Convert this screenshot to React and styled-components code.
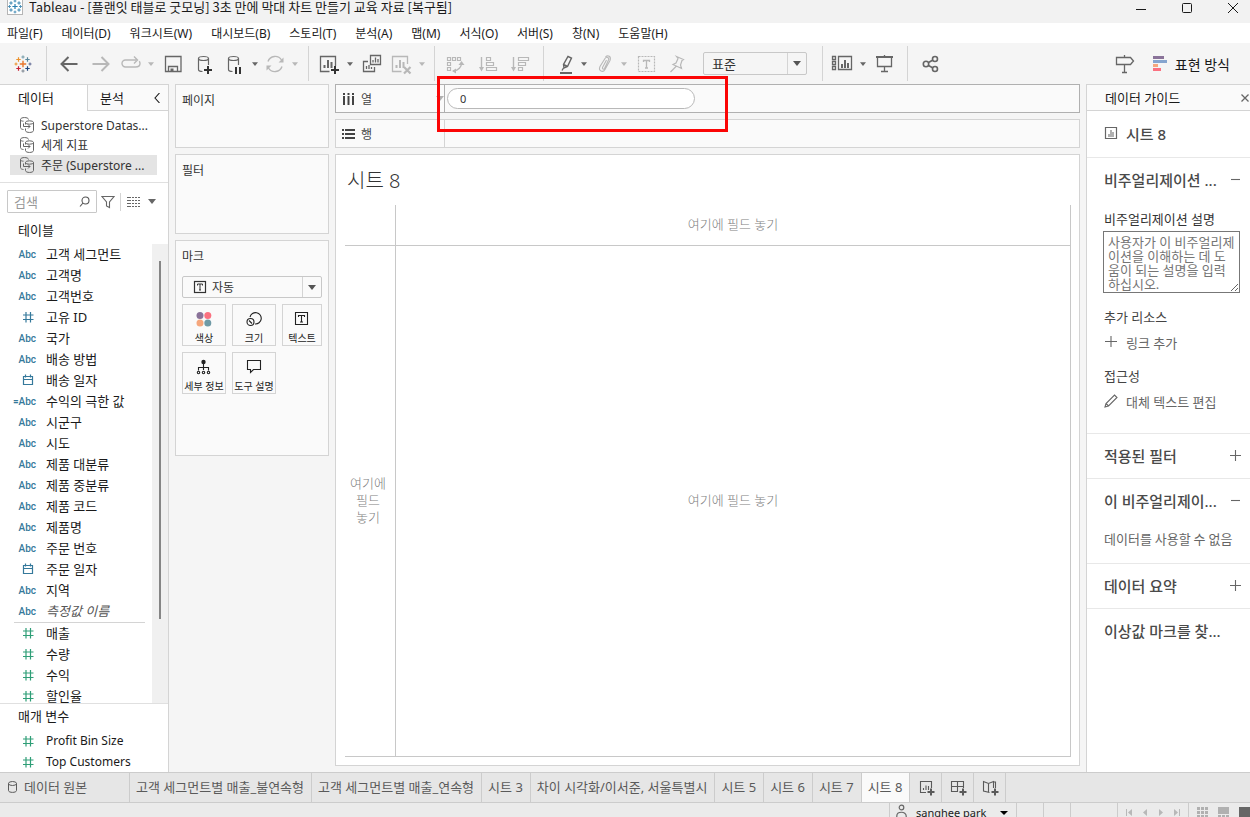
import React from "react";
import styled, { createGlobalStyle, css } from "styled-components";

const GlobalStyle = createGlobalStyle`
  * { box-sizing: border-box; }
  html, body { margin: 0; padding: 0; overflow: hidden; }
  body, button, input, select, textarea {
    font-family: "Noto Sans", "Noto Sans CJK KR", sans-serif;
    font-size: 13px;
    color: #1a1a1a;
  }
  button { background: none; border: 0; padding: 0; margin: 0; }
  ul { list-style: none; margin: 0; padding: 0; }
  h1, h2, h3, p { margin: 0; font-weight: 400; }
`;

const line = "#d4d4d4";
const ink = "#666666";
const faint = "#b8b8b8";
const narrowFont = `"Noto Sans CJK KR", sans-serif`;

const Window = styled.div`
  display: flex;
  flex-direction: column;
  height: 100vh;
  background: #f5f5f5;
  overflow: hidden;
`;

/* ---------- title bar and menu ---------- */
const TitleBar = styled.header`
  display: flex;
  align-items: flex-start;
  height: 23px;
  flex: none;
  padding-left: 7px;
  background: #f2f2f2;
`;
const AppIcon = styled.span`
  display: flex;
  width: 16px;
  height: 15px;
  border: 1px solid #b5b5b5;
  border-top: 0;
  background: #fff;
`;
const TitleText = styled.h1`
  flex: 1;
  margin-left: 6px;
  font-family: ${narrowFont};
  font-size: 13px;
  line-height: 14px;
  white-space: nowrap;
`;
const WindowButtons = styled.div`
  display: flex;
  margin-right: -6px;
`;
const WindowButton = styled.button`
  width: 46px;
  height: 15px;
  display: flex;
  align-items: center;
  justify-content: center;
`;
const MenuBar = styled.nav`
  display: flex;
  gap: 19px;
  height: 20px;
  flex: none;
  padding-left: 7px;
  background: #fff;
`;
const MenuItem = styled.button`
  padding-top: 1px;
  font-size: 12px;
  line-height: 19px;
  white-space: nowrap;
`;

/* ---------- toolbar ---------- */
const Toolbar = styled.div`
  display: flex;
  align-items: center;
  height: 41px;
  flex: none;
`;
const ToolButton = styled.button`
  display: flex;
  align-items: center;
  justify-content: center;
  width: ${(p) => p.$width || 32}px;
  height: 32px;
  flex: none;
  color: ${(p) => (p.$off ? faint : ink)};
`;
const HomeButton = styled(ToolButton)`
  width: 40px;
  padding-left: 5px;
`;
const ToolSlot = styled.span`
  display: flex;
  width: 28px;
  justify-content: center;
`;
const CaretSlot = styled.span`
  display: flex;
  width: 12px;
  justify-content: center;
`;
const Separator = styled.span`
  width: 1px;
  height: 35px;
  flex: none;
  margin: 0 ${(p) => (p.$wide ? 7 : 6)}px;
  background: ${line};
`;
const Spacer = styled.span`
  flex: 1;
`;
const ShowMe = styled.button`
  display: flex;
  align-items: center;
  gap: 7px;
  margin: 0 20px 0 12px;
  font-size: 14px;
  white-space: nowrap;
`;

const SelectBox = styled.label`
  position: relative;
  display: flex;
  align-items: center;
  height: ${(p) => p.$height}px;
  border: 1px solid #c8c8c8;
  border-radius: 2px;
  background: #fafafa;
  color: #333;
`;
const FitBox = styled(SelectBox)`
  width: 104px;
  flex: none;
  margin: 0 9px;
  background: #f5f5f5;
`;
const Select = styled.select`
  appearance: none;
  flex: 1;
  min-width: 0;
  height: 100%;
  border: 0;
  outline: 0;
  background: transparent;
  padding: 0 20px 0 ${(p) => (p.$small ? 5 : 8)}px;
  font-size: ${(p) => (p.$small ? 12 : 13)}px;
  color: #333;
`;
const SelectArrow = styled.span`
  position: absolute;
  top: 0;
  right: 0;
  bottom: 0;
  width: 19px;
  display: flex;
  align-items: center;
  justify-content: center;
  border-left: 1px solid ${line};
  pointer-events: none;
`;

/* ---------- workspace ---------- */
const Workspace = styled.main`
  display: flex;
  flex: 1;
  min-height: 0;
`;
const DataPane = styled.aside`
  display: flex;
  flex-direction: column;
  width: 169px;
  flex: none;
  background: #fff;
  border-top: 1px solid ${line};
  border-right: 1px solid ${line};
`;
const PaneTabs = styled.div`
  display: flex;
  height: 26px;
  flex: none;
`;
const PaneTab = styled.button`
  text-align: left;
  padding-left: ${(p) => (p.$active ? 18 : 12)}px;
  line-height: 24px;
  ${(p) =>
    p.$active
      ? css`width: 87px;`
      : css`
          flex: 1;
          display: flex;
          align-items: center;
          justify-content: space-between;
          padding-right: 6px;
          background: #fafafa;
          border-left: 1px solid ${line};
          border-bottom: 1px solid ${line};
        `}
`;
const Sources = styled.ul`
  flex: none;
  padding: 4px 11px 7px 10px;
  border-bottom: 1px solid #e0e0e0;
`;
const Source = styled.li`
  display: flex;
  align-items: center;
  gap: 5px;
  height: 20px;
  padding-left: 9px;
  font-size: 12px;
  color: #333;
  white-space: nowrap;
  background: ${(p) => (p.$active ? "#e4e4e4" : "transparent")};
  svg { flex: none; color: ${ink}; }
`;
const SearchRow = styled.div`
  display: flex;
  align-items: center;
  flex: none;
  margin: 7px 0 0 7px;
  height: 23px;
`;
const SearchBox = styled.label`
  display: flex;
  align-items: center;
  width: 90px;
  height: 23px;
  padding: 0 5px 0 6px;
  border: 1px solid #c8c8c8;
  border-radius: 1px;
  color: #555;
`;
const SearchInput = styled.input`
  flex: 1;
  min-width: 0;
  padding: 0;
  border: 0;
  outline: 0;
  font-size: 13px;
  &::placeholder { color: #999; opacity: 1; }
`;
const MiniButton = styled.button`
  display: flex;
  align-items: center;
  justify-content: center;
  width: ${(p) => p.$width}px;
  height: 20px;
  color: ${ink};
`;
const MiniRule = styled.span`
  width: 1px;
  height: 18px;
  margin: 0 2px;
  background: ${line};
`;
const PaneHeading = styled.h2`
  flex: none;
  padding-left: 18px;
  margin-top: ${(p) => (p.$spaced ? 5 : 0)}px;
  padding-bottom: 2px;
  font-size: 13px;
  line-height: 24px;
`;
const FieldArea = styled.div`
  display: flex;
  flex: 1;
  min-height: 0;
`;
const FieldList = styled.ul`
  flex: 1;
  overflow: hidden;
`;
const Field = styled.li`
  display: flex;
  align-items: center;
  gap: 10px;
  height: 21px;
  padding-bottom: ${(p) => (p.$latin ? 0 : 2)}px;
  font-size: ${(p) => (p.$latin ? 12 : 13)}px;
  white-space: nowrap;
  font-style: ${(p) => (p.$italic ? "italic" : "normal")};
  color: ${(p) => (p.$italic ? "#555" : "#1a1a1a")};
`;
const FieldKind = styled.span`
  display: flex;
  justify-content: flex-end;
  width: 36px;
  flex: none;
  padding-top: 1px;
  font-family: Roboto, sans-serif;
  font-size: 10px;
  font-weight: 500;
  font-style: normal;
  color: ${(p) => (p.$measure ? "#2f9e77" : "#35799b")};
`;
const FieldRule = styled.li`
  height: 1px;
  margin: 0 7px 0 14px;
  background: ${line};
`;
const ScrollTrack = styled.div`
  width: 16px;
  padding: 17px 0 84px 7px;
  background: #f0f0f0;
`;
const ScrollThumb = styled.div`
  width: 2px;
  height: 100%;
  background: #858585;
`;
const Parameters = styled.section`
  flex: none;
  border-top: 1px solid #e0e0e0;
`;

/* ---------- cards ---------- */
const CardColumn = styled.div`
  display: flex;
  flex-direction: column;
  gap: 6px;
  width: 154px;
  flex: none;
  margin: 0 6px;
`;
const Card = styled.section`
  flex: none;
  min-height: ${(p) => p.$height}px;
  padding: 6px 6px 0;
  background: #fafafa;
  border: 1px solid ${line};
`;
const CardTitle = styled.h2`
  font-size: 12px;
  line-height: 20px;
  color: #333;
`;
const MarkType = styled(SelectBox)`
  margin-top: 9px;
  padding-left: 10px;
`;
const MarkGrid = styled.div`
  display: grid;
  grid-template-columns: 44px 44px 40px;
  gap: 6px;
  margin-top: 6px;
`;
const MarkButton = styled.button`
  display: flex;
  flex-direction: column;
  align-items: center;
  gap: 2px;
  height: 42px;
  padding-top: 4px;
  border: 1px solid ${line};
  font-size: 10px;
  line-height: 14px;
  color: #222;
  white-space: nowrap;
`;

/* ---------- shelves and sheet ---------- */
const SheetColumn = styled.div`
  display: flex;
  flex-direction: column;
  gap: 6px;
  flex: 1;
  min-width: 0;
  padding-bottom: 6px;
`;
const Shelf = styled.section`
  display: flex;
  height: 29px;
  flex: none;
  background: #fafafa;
  border: 1px solid ${(p) => (p.$active ? "#b0b0b0" : line)};
`;
const ShelfLabel = styled.h2`
  display: flex;
  align-items: center;
  gap: 6px;
  width: 109px;
  padding-left: 6px;
  border-right: 1px solid ${(p) => (p.$active ? "#b0b0b0" : line)};
  font-size: 12px;
  color: #444;
`;
const ShelfBody = styled.div`
  position: relative;
  flex: 1;
  padding: 3px 2px;
`;
const Pill = styled.input`
  display: block;
  width: 248px;
  height: 21px;
  padding: 0 12px;
  border: 1px solid #b8b8b8;
  border-radius: 11px;
  outline: 0;
  background: #fff;
  font-size: 11px;
  color: #333;
`;
const Highlight = styled.div`
  position: absolute;
  z-index: 2;
  top: -9px;
  left: -8px;
  width: 291px;
  height: 56px;
  border: 3px solid #fb0505;
  pointer-events: none;
`;
const Sheet = styled.section`
  display: flex;
  flex-direction: column;
  flex: 1;
  min-height: 0;
  padding: 10px 8px 8px 9px;
  background: #fff;
  border: 1px solid ${line};
`;
const SheetTitle = styled.h2`
  padding-left: 2px;
  font-size: 20px;
  font-weight: 300;
  line-height: 32px;
  color: #333;
`;
const DropGrid = styled.div`
  flex: 1;
  display: grid;
  grid-template-columns: 51px 1fr;
  grid-template-rows: 41px 1fr;
  margin-top: 8px;
  border: 1px solid #c8c8c8;
  border-width: 0 1px 1px 0;
`;
const DropCell = styled.div`
  display: flex;
  align-items: center;
  justify-content: center;
  text-align: center;
  padding: 0 ${(p) => (p.$right ? 8 : 4)}px 1px 4px;
  line-height: 17px;
  font-weight: 300;
  color: #808080;
  border: 0 solid #c8c8c8;
  border-right-width: ${(p) => (p.$right ? 1 : 0)}px;
  border-bottom-width: ${(p) => (p.$bottom ? 1 : 0)}px;
`;

/* ---------- data guide ---------- */
const Guide = styled.aside`
  width: 164px;
  flex: none;
  margin-left: 6px;
  background: #fff;
  border: 1px solid ${line};
  border-width: 1px 0 0 1px;
  overflow: hidden;
`;
const GuideHead = styled.header`
  display: flex;
  align-items: center;
  justify-content: space-between;
  height: 26px;
  padding-left: 18px;
  background: #fafafa;
  border-bottom: 1px solid ${line};
`;
const GuideTitle = styled.h2`
  font-size: 13px;
`;
const GuideSection = styled.section`
  padding: 0 8px 0 17px;
  border-bottom: ${(p) => (p.$last ? 0 : 1)}px solid #e8e8e8;
`;
const GuideHeading = styled.h3`
  display: flex;
  align-items: center;
  justify-content: ${(p) => (p.$start ? "flex-start" : "space-between")};
  gap: ${(p) => (p.$start ? 8 : 0)}px;
  height: ${(p) => (p.$start ? 46 : 44)}px;
  padding-bottom: 2px;
  font-size: 15px;
  font-weight: 500;
  color: #4a4a4a;
  white-space: nowrap;
  svg { color: ${ink}; }
`;
const GuideLabel = styled.label`
  display: block;
  line-height: 20px;
  color: #333;
  white-space: nowrap;
`;
const GuideCaption = styled.p`
  margin-top: 14px;
  line-height: 20px;
  color: #444;
`;
const Description = styled.textarea`
  display: block;
  width: 137px;
  height: 62px;
  margin: 2px 0 0 -1px;
  padding: 3px 4px;
  border: 1px solid #777;
  border-radius: 0;
  line-height: 14px;
  overflow: hidden;
  &::placeholder { color: #757575; opacity: 1; }
`;
const GuideAction = styled.button`
  display: flex;
  align-items: center;
  gap: 8px;
  height: 20px;
  margin-top: 5px;
  color: ${ink};
  white-space: nowrap;
`;
const GuideText = styled.p`
  line-height: 20px;
  padding: 6px 0 14px;
  font-family: ${narrowFont};
  color: #666;
  white-space: nowrap;
`;
const GuideFirst = styled.div`
  padding: 7px 0 22px;
`;

/* ---------- bottom bars ---------- */
const SheetTabs = styled.nav`
  display: flex;
  height: 31px;
  flex: none;
  background: #e6e6e6;
  border: 1px solid #cccccc;
  border-width: 1px 0;
`;
const SheetTab = styled.button`
  display: flex;
  align-items: center;
  gap: 7px;
  min-width: ${(p) => (p.$source ? 130 : 0)}px;
  padding: 0 7px 2px ${(p) => (p.$source ? 8 : 6)}px;
  border-right: 1px solid #cccccc;
  background: ${(p) => (p.$active ? "#fafafa" : "transparent")};
  color: #5a5a5a;
  white-space: nowrap;
`;
const NewTab = styled(SheetTab)`
  justify-content: center;
  width: 32px;
  padding: 0;
`;
const StatusBar = styled.footer`
  display: flex;
  justify-content: flex-end;
  height: 14px;
  flex: none;
  background: #ebebeb;
`;
const StatusCell = styled.div`
  display: flex;
  gap: ${(p) => p.$gap || 0}px;
  width: ${(p) => p.$width}px;
  padding-left: ${(p) => p.$pad || 0}px;
  border-left: 1px solid #cccccc;
`;
const UserButton = styled.button`
  display: flex;
  align-items: flex-start;
  flex: 1;
  gap: 9px;
  height: 20px;
  font-size: 11px;
  line-height: 20px;
  svg { color: ${ink}; }
`;
const UserName = styled.span`
  flex: 1;
  text-align: left;
  white-space: nowrap;
`;

/* ---------- icons ---------- */
const Svg = ({ size = 24, w, h, sw = 1, children }) => (
  <svg width={w || size} height={h || size} viewBox={`0 0 ${w || size} ${h || size}`} fill="none" stroke="currentColor" strokeWidth={sw} aria-hidden="true">
    {children}
  </svg>
);
const Caret = ({ size = 6, color = "currentColor" }) => (
  <svg width={size} height={size / 2 + 1} viewBox="0 0 8 5" aria-hidden="true">
    <path d="M0 0h8L4 5z" fill={color} />
  </svg>
);
const Cross = ({ x, y, r, c, w }) => <path d={`M${x - r} ${y}h${2 * r}M${x} ${y - r}v${2 * r}`} stroke={c} strokeWidth={w} />;

const TableauMark = () => (
  <Svg w={18} h={18}>
    <Cross x={9} y={9} r={3.2} c="#e8762d" w={1.4} />
    <Cross x={4.5} y={4.5} r={2.2} c="#eb912b" w={1.2} />
    <Cross x={13.5} y={4.5} r={2.2} c="#59879b" w={1.2} />
    <Cross x={4.5} y={13.5} r={2.2} c="#c72035" w={1.2} />
    <Cross x={13.5} y={13.5} r={2.2} c="#1f457e" w={1.2} />
    <Cross x={9} y={2} r={1.6} c="#7099a6" w={1} />
    <Cross x={9} y={16} r={1.6} c="#7b848f" w={1} />
    <Cross x={2} y={9} r={1.5} c="#eb912b" w={1} />
    <Cross x={16} y={9} r={1.5} c="#5b6591" w={1} />
  </Svg>
);
const TitleMark = () => (
  <Svg w={14} h={14}>
    <Cross x={7} y={6.5} r={2.6} c="#2a7fb0" w={1.2} />
    {[[3, 3], [11, 3], [3, 10], [11, 10]].map(([x, y]) => <Cross key={`${x}${y}`} x={x} y={y} r={1.7} c="#3a86b0" w={1} />)}
    {[[7, 1], [7, 12], [1.5, 6.5], [12.5, 6.5]].map(([x, y]) => <Cross key={`${x}-${y}`} x={x} y={y} r={1.4} c="#4a90b8" w={1} />)}
  </Svg>
);
const Database = ({ children }) => (
  <Svg sw={1.2}>
    <ellipse cx="10.5" cy="6.500" rx="5" ry="2" />
    <path d="M5.500 6.500v11c0 1.300 1.500 2 4 2M15.500 6.500V13" />
    {children}
  </Svg>
);
const ChartBars = () => <path d="M6.500 16v-3M10 16V8M13.500 16v-6" strokeWidth="2" />;

const icons = {
  back: <Svg sw={2}><path d="M20.500 12H5M11.500 5l-7 7 7 7" /></Svg>,
  forward: <Svg sw={2}><path d="M3.500 12H19M12.500 5l7 7-7 7" /></Svg>,
  redo: <Svg sw={1.4}><path d="M17.500 8H6.500a3.500 3.500 0 0 0 0 7h10c3 0 4.500-1.500 4.500-3.500 0-1-.3-1.700-.8-2.300M15 4.500L18.500 8 15 11.500" /></Svg>,
  save: <Svg sw={1.3}><path d="M4.500 4.500h15.500v15H4.500zM7.500 19.500v-5h9v5" /><path d="M9.500 16.500h3v3h-3z" fill="currentColor" stroke="none" /></Svg>,
  addData: <Database><path d="M15 14v8M11 18h8" stroke="#333" strokeWidth="2" /></Database>,
  pause: <Database><path d="M13 15v7M17 15v7" stroke="#333" strokeWidth="2" /></Database>,
  refresh: <Svg sw={1.4}><path d="M5 9.500A7.500 7.500 0 0 1 18.500 8M19 14.500A7.500 7.500 0 0 1 5.500 16" /><path d="M20.500 5.500v5h-5zM3.500 18.500v-5h5z" fill="currentColor" stroke="none" /></Svg>,
  newSheet: <Svg><path d="M11.500 19.500h-9v-15h15V14" strokeWidth="1.3" /><ChartBars /><path d="M17 14v8M13 18h8" stroke="#333" strokeWidth="2" /></Svg>,
  duplicate: <Svg sw={1.3}><path d="M10.500 3.500h10v9h-10zM8 9.500H3.500v10h11V15M6.500 17v-3M9 17v-4M11.500 17v-2M13 10.500V8M15.500 10.500v-5M18 10.500V7" /></Svg>,
  clear: <Svg><path d="M11.500 19.500h-9v-15h15V12" strokeWidth="1.3" /><ChartBars /><path d="M14 15l6.500 6.500M20.500 15L14 21.500" strokeWidth="2.200" /></Svg>,
  swap: <Svg sw={1.2}><path d="M2.500 5.500h3v3h-3zM7.500 5.500h3v3h-3zM12.500 5.500h3v3h-3zM2.500 10.500h3v3h-3zM2.500 15.500h3v3h-3z" /><path d="M16.500 11c0 4-3 7.500-8 8" strokeWidth="1.4" /><path d="M13.500 13l3-4 3 4zM11 16.500v5l-4-2.500z" fill="currentColor" stroke="none" /></Svg>,
  sortAsc: <Svg sw={1.2}><path d="M4.500 5v11" strokeWidth="1.4" /><path d="M2 15h5l-2.500 4.500z" fill="currentColor" stroke="none" /><path d="M9.500 5.500h4v3h-4zM9.500 10.500h7v3h-7zM9.500 15.500h10v3h-10z" /></Svg>,
  sortDesc: <Svg sw={1.2}><path d="M4.500 5v11" strokeWidth="1.4" /><path d="M2 15h5l-2.500 4.500z" fill="currentColor" stroke="none" /><path d="M9.500 5.500h10v3h-10zM9.500 10.500h7v3h-7zM9.500 15.500h4v3h-4z" /></Svg>,
  highlighter: <Svg><path d="M16 4.500l3.500 1.500-4 8.500-3.500 1.500-.5-3.500zM11.500 12.500l4 2M11.500 16l-1.500 2.500" strokeWidth="1.4" /><path d="M8 21h12" strokeWidth="2" /></Svg>,
  clip: <Svg sw={1.1}><path d="M14.500 8l-4 7.500c-.6 1.500 1.200 2.300 2 1l4-8.500c1-2.500-2-3.800-3.500-1.500L8 14.500c-2 4.500 3 6.500 5 3L18 8.500c1.500-4-2-6-4.500-3.500" /></Svg>,
  textLabel: <Svg><rect x="4.500" y="4.500" width="16" height="15" strokeDasharray="2 1" strokeWidth="1.200" /><path d="M9.500 10V8.500h6V10M12.500 8.500v7.500M11 16h3" strokeWidth="1.3" /></Svg>,
  pin: <Svg sw={1.2}><path d="M10.500 4.500l7 3-1.500 1-1.500 4.500 1 3.500-8.500-4 3-1.500 2-4.500zM10 14.500L4.500 20" /></Svg>,
  cards: <Svg sw={1.3}><path d="M1.500 4.500h3v3h-3zM1.500 9.500h3v3h-3zM1.500 14.500h3v3h-3zM7.500 4.500h13v13h-13z" /><path d="M11 16v-4M14 16V8M17 16v-5" strokeWidth="2" /></Svg>,
  present: <Svg sw={1.3}><path d="M3 5h17" strokeWidth="2" /><path d="M4.500 6v8.500h14V6M11.500 14.500v5M8 19.500h7M11.500 3v2" /></Svg>,
  share: <Svg sw={1.6}><circle cx="8" cy="12" r="2.700" /><circle cx="17" cy="7" r="2.500" /><circle cx="17" cy="17" r="2.500" /><path d="M10.500 10.500L15 8M10.500 13.500l4.500 2.500" /></Svg>,
  guide: <Svg sw={1.3}><path d="M3.500 5.500h14l3 3.500-3 3.500h-14zM11.500 3v2.500M11.500 12.500v8M9 20.500h5" /></Svg>,
};

const Tool = ({ icon, label, off, menu }) => (
  <ToolButton aria-label={label} $off={off} $width={menu ? 40 : 32}>
    {menu ? (
      <>
        <ToolSlot>{icons[icon]}</ToolSlot>
        <CaretSlot><Caret /></CaretSlot>
      </>
    ) : icons[icon]}
  </ToolButton>
);

const HashIcon = () => <Svg w={16} h={14} sw={1.2}><path d="M6 2v10.500M10.500 2v10.500M3 5h10.500M3 9.500h10.500" /></Svg>;
const CalendarIcon = () => <Svg w={16} h={14} sw={1.2}><path d="M3.500 3.500h9v8h-9zM3.500 6.500h9M5.500 1.500v3M10.500 1.500v3" /></Svg>;
const SourceIcon = () => (
  <Svg w={17} h={16} sw={1}>
    <path d="M9.500 2.500c0-2.600-8-2.600-8 0v8c0 1.200 1.500 2 3 2M1.500 2.500c0 1.200 1.500 1.700 3 1.700" />
    <path d="M6.500 5.500v2M6.500 11.500v2c0 2.600 8 2.600 8 0v-8" />
    <ellipse cx="10.500" cy="5.500" rx="4" ry="1.700" />
    <path d="M4.500 6.500v3h6.500M9 7.500l2 2-2 2" />
  </Svg>
);
const Plus = ({ size = 13 }) => <Svg size={size} sw={1.1}><path d="M6.500 1v11M1 6.500h11" /></Svg>;
const Minus = () => <Svg size={13} sw={1.1}><path d="M2 6.500h9" /></Svg>;
const BoxedT = ({ size }) => (
  <Svg w={size} h={size} sw={1.2}>
    <rect x="1.500" y="1.500" width={size - 3} height={size - 3} />
    <path d={`M${size / 2 - 2.5} 5.500v-1.500h5v1.500M${size / 2} 4v${size - 8}M${size / 2 - 1} ${size - 4}h2`} strokeWidth="1" />
  </Svg>
);

const markIcons = {
  color: (
    <Svg w={20} h={20}>
      <g stroke="none">
        <circle cx="6" cy="6.500" r="3.500" fill="#8a7399" />
        <circle cx="13.800" cy="6.500" r="3.500" fill="#fb7180" />
        <circle cx="6" cy="14" r="3.500" fill="#f5a77d" />
        <circle cx="13.800" cy="14" r="3.500" fill="#6f9aa6" />
      </g>
    </Svg>
  ),
  size: <Svg size={20} sw={1.1}><path d="M6 8a5.700 5.700 0 1 1 5 7" /><circle cx="6.500" cy="13" r="3.500" /><path d="M5 11.500l3 3" /></Svg>,
  text: <Svg size={20} sw={1.1}><path d="M3.500 3.500h12v12h-12zM6.500 8V6.500h6V8M9.500 6.500v6.500M8 13h3" /></Svg>,
  detail: (
    <Svg size={20} sw={1.1}>
      <circle cx="9.500" cy="5" r="2.200" fill="currentColor" stroke="none" />
      <path d="M9.500 6v7M4.500 13.500v-3h10v3" />
      <circle cx="4.500" cy="15.500" r="1.200" /><circle cx="9.500" cy="15.500" r="1.200" /><circle cx="14.500" cy="15.500" r="1.200" />
    </Svg>
  ),
  tooltip: <Svg size={20} sw={1.1}><path d="M3.500 3.500h13v9H9.500l-3 3v-3h-3z" /></Svg>,
};

const tabIcons = {
  sheet: <Svg size={18} sw={1.1}><path d="M9 13.500H3.500v-11h11V9M6.500 11V9M9 11V6.500M11.500 11V7" /><path d="M14 9.500v7M10.500 13h7" strokeWidth="2" /></Svg>,
  dashboard: <Svg size={18} sw={1.1}><path d="M9 12.500H2.500v-10h12V9M2.500 7.500h12M8.500 2.500v10" /><path d="M14 9.500v7M10.500 13h7" strokeWidth="2" /></Svg>,
  story: <Svg size={18} sw={1.1}><path d="M8.500 13.500l-6-1.500V2.500l5 2 5-2V9M7.500 4.500V13M12.500 3h2v6" /><path d="M14 9.500v7M10.500 13h7" strokeWidth="2" /></Svg>,
};

/* ---------- content ---------- */
const menus = ["파일(F)", "데이터(D)", "워크시트(W)", "대시보드(B)", "스토리(T)", "분석(A)", "맵(M)", "서식(O)", "서버(S)", "창(N)", "도움말(H)"];
const dimensions = [
  ["Abc", "고객 세그먼트"], ["Abc", "고객명"], ["Abc", "고객번호"], ["#", "고유 ID"], ["Abc", "국가"],
  ["Abc", "배송 방법"], ["date", "배송 일자"], ["=Abc", "수익의 극한 값"], ["Abc", "시군구"], ["Abc", "시도"],
  ["Abc", "제품 대분류"], ["Abc", "제품 중분류"], ["Abc", "제품 코드"], ["Abc", "제품명"], ["Abc", "주문 번호"],
  ["date", "주문 일자"], ["Abc", "지역"], ["Abc", "측정값 이름"],
];
const measures = ["매출", "수량", "수익", "할인율"];
const sheets = ["고객 세그먼트별 매출_불연속형", "고객 세그먼트별 매출_연속형", "시트 3", "차이 시각화/이서준, 서울특별시", "시트 5", "시트 6", "시트 7", "시트 8"];

const FieldRow = ({ kind, name, measure, latin }) => (
  <Field $italic={name === "측정값 이름"} $latin={latin}>
    <FieldKind $measure={measure}>
      {kind === "#" ? <HashIcon /> : kind === "date" ? <CalendarIcon /> : kind}
    </FieldKind>
    {name}
  </Field>
);

export default function App() {
  return (
    <Window>
      <GlobalStyle />
      <TitleBar>
        <AppIcon><TitleMark /></AppIcon>
        <TitleText>Tableau - [플랜잇 태블로 굿모닝] 3초 만에 막대 차트 만들기 교육 자료 [복구됨]</TitleText>
        <WindowButtons>
          <WindowButton aria-label="최소화"><Svg size={12}><path d="M1 7.500h10" /></Svg></WindowButton>
          <WindowButton aria-label="최대화"><Svg size={12}><rect x="1.500" y="1.500" width="9" height="9" rx="1" /></Svg></WindowButton>
          <WindowButton aria-label="닫기"><Svg size={12}><path d="M1 1l10 10M11 1L1 11" /></Svg></WindowButton>
        </WindowButtons>
      </TitleBar>
      <MenuBar>{menus.map((m) => <MenuItem key={m}>{m}</MenuItem>)}</MenuBar>

      <Toolbar>
        <HomeButton aria-label="시작 페이지"><TableauMark /></HomeButton>
        <Separator />
        <Tool icon="back" label="뒤로" />
        <Tool icon="forward" label="앞으로" off />
        <Tool icon="redo" label="다시 실행" off menu />
        <Tool icon="save" label="저장" />
        <Tool icon="addData" label="새 데이터 원본" />
        <Tool icon="pause" label="자동 업데이트 일시 중지" menu />
        <Tool icon="refresh" label="새로 고침" off menu />
        <Separator $wide />
        <Tool icon="newSheet" label="새 워크시트" menu />
        <Tool icon="duplicate" label="복제" />
        <Tool icon="clear" label="시트 지우기" off menu />
        <Separator />
        <Tool icon="swap" label="행과 열 바꾸기" off />
        <Tool icon="sortAsc" label="오름차순 정렬" off />
        <Tool icon="sortDesc" label="내림차순 정렬" off />
        <Separator />
        <Tool icon="highlighter" label="하이라이트" menu />
        <Tool icon="clip" label="그룹" off menu />
        <Tool icon="textLabel" label="마크 레이블 표시" off />
        <Tool icon="pin" label="축 고정" off />
        <FitBox $height={23}>
          <Select aria-label="맞춤"><option>표준</option></Select>
          <SelectArrow><Caret size={8} color="#555" /></SelectArrow>
        </FitBox>
        <Separator />
        <Tool icon="cards" label="카드 표시" menu />
        <Tool icon="present" label="프레젠테이션 모드" />
        <Separator />
        <Tool icon="share" label="공유" />
        <Spacer />
        <Tool icon="guide" label="데이터 가이드 열기" />
        <ShowMe>
          <Svg w={15} h={16}>
            <g stroke="none">
              <path d="M0 0h11v3H0z" fill="#8a7399" /><path d="M0 4h14v3H0z" fill="#86a5cf" />
              <path d="M0 8h5v3H0z" fill="#f5a77d" /><path d="M0 12h8v3H0z" fill="#fb7180" />
            </g>
          </Svg>
          표현 방식
        </ShowMe>
      </Toolbar>

      <Workspace>
        <DataPane>
          <PaneTabs>
            <PaneTab $active>데이터</PaneTab>
            <PaneTab>분석<Svg size={10} sw={1.1}><path d="M7.500 0L3 5l4.500 5" /></Svg></PaneTab>
          </PaneTabs>
          <Sources>
            <Source><SourceIcon />Superstore Datas...</Source>
            <Source><SourceIcon />세계 지표</Source>
            <Source $active><SourceIcon />주문 (Superstore ...</Source>
          </Sources>
          <SearchRow>
            <SearchBox>
              <SearchInput placeholder="검색" aria-label="검색" />
              <Svg size={12} sw={1.1}><circle cx="6.500" cy="4.500" r="3.500" /><path d="M4 7L1 10.500" /></Svg>
            </SearchBox>
            <MiniButton aria-label="필터" $width={21}><Svg size={14} sw={1.1}><path d="M1 1.500h12L8.500 7v5.500l-3-1.500V7z" /></Svg></MiniButton>
            <MiniRule />
            <MiniButton aria-label="보기" $width={21}>
              <Svg w={13} h={10}><path d="M0 .5h13M0 3.500h13M0 6.500h13M0 9.500h13" strokeDasharray="4 1 2 1 2 1 2 1" /></Svg>
            </MiniButton>
            <MiniButton aria-label="옵션" $width={16}><Caret size={8} /></MiniButton>
          </SearchRow>
          <PaneHeading $spaced>테이블</PaneHeading>
          <FieldArea>
            <FieldList>
              {dimensions.map(([k, n]) => <FieldRow key={n} kind={k} name={n} />)}
              <FieldRule />
              {measures.map((n) => <FieldRow key={n} kind="#" name={n} measure />)}
            </FieldList>
            <ScrollTrack><ScrollThumb /></ScrollTrack>
          </FieldArea>
          <Parameters>
            <PaneHeading>매개 변수</PaneHeading>
            <ul>
              <FieldRow kind="#" name="Profit Bin Size" measure latin />
              <FieldRow kind="#" name="Top Customers" measure latin />
            </ul>
          </Parameters>
        </DataPane>

        <CardColumn>
          <Card $height={64}><CardTitle>페이지</CardTitle></Card>
          <Card $height={80}><CardTitle>필터</CardTitle></Card>
          <Card $height={216}>
            <CardTitle>마크</CardTitle>
            <MarkType $height={22}>
              <BoxedT size={14} />
              <Select aria-label="마크 유형" $small><option>자동</option></Select>
              <SelectArrow><Caret size={8} color="#555" /></SelectArrow>
            </MarkType>
            <MarkGrid>
              <MarkButton>{markIcons.color}색상</MarkButton>
              <MarkButton>{markIcons.size}크기</MarkButton>
              <MarkButton>{markIcons.text}텍스트</MarkButton>
              <MarkButton>{markIcons.detail}세부 정보</MarkButton>
              <MarkButton>{markIcons.tooltip}도구 설명</MarkButton>
            </MarkGrid>
          </Card>
        </CardColumn>

        <SheetColumn>
          <Shelf $active>
            <ShelfLabel $active>
              <Svg w={13} h={12} sw={2}><path d="M2 0v2M6.500 0v2M11 0v2M2 3v9M6.500 3v9M11 3v9" /></Svg>
              열
              <Spacer />
              <Caret size={8} color="#b0b0b0" />
            </ShelfLabel>
            <ShelfBody>
              <Pill aria-label="열 필드" defaultValue="0" />
              <Highlight />
            </ShelfBody>
          </Shelf>
          <Shelf>
            <ShelfLabel>
              <Svg w={13} h={12} sw={2}><path d="M0 2h2M0 6h2M0 10h2M3 2h10M3 6h10M3 10h10" /></Svg>
              행
            </ShelfLabel>
          </Shelf>
          <Sheet>
            <SheetTitle>시트 8</SheetTitle>
            <DropGrid>
              <DropCell $right $bottom />
              <DropCell $bottom>여기에 필드 놓기</DropCell>
              <DropCell $right>여기에<br />필드<br />놓기</DropCell>
              <DropCell>여기에 필드 놓기</DropCell>
            </DropGrid>
          </Sheet>
        </SheetColumn>

        <Guide>
          <GuideHead>
            <GuideTitle>데이터 가이드</GuideTitle>
            <MiniButton aria-label="닫기" $width={10}><Svg size={10} sw={1.3}><path d="M1.500 1.500l7 7M8.500 1.500l-7 7" /></Svg></MiniButton>
          </GuideHead>
          <GuideSection>
            <GuideHeading $start>
              <Svg size={14}><path d="M1.500 1.500h11v11h-11z" strokeWidth="1.200" /><path d="M5 11V8M7 11V4M9 11V6" stroke="#b0b0b0" strokeWidth="2" /></Svg>
              시트 8
            </GuideHeading>
          </GuideSection>
          <GuideSection>
            <GuideHeading>비주얼리제이션 ...<Minus /></GuideHeading>
            <GuideFirst>
              <GuideLabel htmlFor="description">비주얼리제이션 설명</GuideLabel>
              <Description id="description" placeholder="사용자가 이 비주얼리제이션을 이해하는 데 도움이 되는 설명을 입력하십시오." />
              <GuideCaption>추가 리소스</GuideCaption>
              <GuideAction><Svg size={14} sw={1.100}><path d="M7 1v11M1 6.500h12" /></Svg>링크 추가</GuideAction>
              <GuideCaption>접근성</GuideCaption>
              <GuideAction><Svg size={14} sw={1.100}><path d="M1 13l1-3.500L10.500 1l2.500 2.500L4.500 12zM2 9.500L4.500 12" /></Svg>대체 텍스트 편집</GuideAction>
            </GuideFirst>
          </GuideSection>
          <GuideSection><GuideHeading>적용된 필터<Plus /></GuideHeading></GuideSection>
          <GuideSection>
            <GuideHeading>이 비주얼리제이...<Minus /></GuideHeading>
            <GuideText>데이터를 사용할 수 없음</GuideText>
          </GuideSection>
          <GuideSection><GuideHeading>데이터 요약<Plus /></GuideHeading></GuideSection>
          <GuideSection $last><GuideHeading>이상값 마크를 찾...</GuideHeading></GuideSection>
        </Guide>
      </Workspace>

      <SheetTabs>
        <SheetTab $source>
          <Svg w={9} h={12}><path d="M.5 2.500v7c0 2.500 8 2.500 8 0v-7" /><ellipse cx="4.500" cy="2.500" rx="4" ry="2" /></Svg>
          데이터 원본
        </SheetTab>
        {sheets.map((s) => <SheetTab key={s} $active={s === "시트 8"}>{s}</SheetTab>)}
        <NewTab aria-label="새 워크시트">{tabIcons.sheet}</NewTab>
        <NewTab aria-label="새 대시보드">{tabIcons.dashboard}</NewTab>
        <NewTab aria-label="새 스토리">{tabIcons.story}</NewTab>
      </SheetTabs>

      <StatusBar>
        <StatusCell $width={127} $pad={6}>
          <UserButton>
            <Svg w={11} h={18} sw={1.200}><circle cx="5.500" cy="4.500" r="2.300" /><path d="M.8 16v-3c0-5 9.400-5 9.400 0v3" /></Svg>
            <UserName>sanghee park</UserName>
            <Svg w={16} h={16}><path d="M0 8h8l-4 4z" fill="#000" stroke="none" /></Svg>
          </UserButton>
        </StatusCell>
        <StatusCell $width={27} />
        <StatusCell $width={27} />
        <StatusCell $width={47} />
        <StatusCell $width={71} $pad={8}>
          <Svg w={58} h={14}>
            <g fill="#b8b8b8" stroke="none">
              <path d="M0 6h1v7H0zM6 6v7L2 9.500zM21 6v7l-4-3.500zM33 6v7l4-3.500zM48 6v7l4-3.500zM53 6h1v7h-1z" />
            </g>
          </Svg>
        </StatusCell>
        <StatusCell $width={62} $pad={8} $gap={10}>
          <Svg w={11} h={14}><path d="M0 5.500h11M0 9.500h11M0 13.500h11" stroke="#b0b0b0" strokeWidth="3" strokeDasharray="3 1" /></Svg>
          <Svg w={11} h={14}><path d="M0 4h11v7H0zM0 12h3v2H0zM4 12h3v2H4zM8 12h3v2H8z" fill="#b0b0b0" stroke="none" /></Svg>
          <Svg w={11} h={14}><path d="M0 4h11v10H0z" fill="#666" stroke="none" /></Svg>
        </StatusCell>
      </StatusBar>
    </Window>
  );
}
